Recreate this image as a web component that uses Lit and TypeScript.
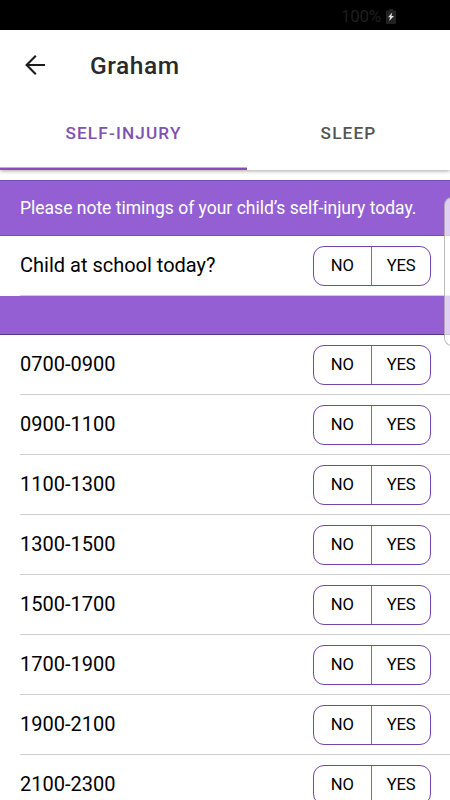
import { LitElement, html, css } from "lit";
import { customElement, property } from "lit/decorators.js";

@customElement("yes-no-toggle")
class YesNoToggle extends LitElement {
  static styles = css`
    :host { display: block; flex: none; }
    .group {
      box-sizing: border-box; width: 118.5px; height: 40px; display: flex;
      border: 1px solid #7445ab; border-radius: 11px; overflow: hidden;
    }
    .option {
      flex: 1; display: flex; align-items: center; justify-content: center;
      font-size: 16.6px; line-height: 20px; color: #000; letter-spacing: -0.1px;
    }
    .option + .option { border-left: 1px solid #8d60c4; }
  `;
  render() {
    return html`<div class="group"><div class="option">NO</div><div class="option">YES</div></div>`;
  }
}

@customElement("question-row")
class QuestionRow extends LitElement {
  @property() label = "";
  static styles = css`
    :host { display: block; flex: none; }
    .row {
      box-sizing: border-box; height: 60px; margin-left: 20px; padding-right: 19px;
      display: flex; align-items: center; justify-content: space-between;
      border-bottom: 1px solid #cfcfcf;
    }
    .label { padding-bottom: 1px; font-size: 20px; line-height: 24px; color: #000; white-space: nowrap; }
  `;
  render() {
    return html`<div class="row"><span class="label">${this.label}</span><yes-no-toggle></yes-no-toggle></div>`;
  }
}

@customElement("app-root")
class AppRoot extends LitElement {
  private slots = [
    "0700-0900", "0900-1100", "1100-1300", "1300-1500",
    "1500-1700", "1700-1900", "1900-2100", "2100-2300",
  ];
  static styles = css`
    :host {
      position: relative; display: flex; flex-direction: column; width: 450px; height: 800px;
      overflow: hidden; background: #fff; font-family: Roboto, "Noto Sans", sans-serif;
    }
    .status {
      box-sizing: border-box; flex: none; height: 30px; background: #000; color: #1e1e1e;
      display: flex; justify-content: flex-end; align-items: center; gap: 5px;
      padding: 2px 54px 0 0; font-size: 17px; line-height: 20px; letter-spacing: -0.3px;
    }
    .battery { display: block; width: 10px; height: 15px; }
    .header { flex: none; height: 140px; background: #fff; box-shadow: 0 1px 4px rgba(0, 0, 0, 0.35); }
    .bar { height: 70px; display: flex; align-items: center; padding-left: 24px; }
    .back { display: block; width: 22px; height: 22px; }
    .title {
      margin-left: 44px; padding-top: 2px; font-size: 24.5px; line-height: 30px;
      font-weight: 500; letter-spacing: 0.55px; color: #2a2a2a;
    }
    .tabs { display: flex; height: 70px; }
    .tab {
      box-sizing: border-box; display: flex; align-items: center; justify-content: center;
      font-size: 17.2px; line-height: 20px; font-weight: 500; letter-spacing: 1.15px; color: #555;
      flex: 1; padding: 1px 0 3px; border-bottom: 2px solid transparent;
    }
    .active {
      flex: none; width: 247px; color: #8052b0; border-bottom-color: #8250b8;
      box-shadow: inset 0 -1px #c5abe0;
    }
    .content { display: flex; flex-direction: column; padding-top: 10px; }
    .note {
      box-sizing: border-box; height: 56px; padding: 0 20px; background: #945fd3; color: #fff;
      border-top: 1px solid #7c4daf; border-bottom: 1px solid #7c4daf;
      display: flex; align-items: center; font-size: 17.5px; line-height: 22px; white-space: nowrap;
    }
    .divider { box-sizing: border-box; height: 39px; background: #945fd3; border-bottom: 1px solid #5b3487; }
    .edge {
      position: absolute; left: 444px; top: 197px; width: 20px; height: 149px; box-sizing: border-box;
      background: rgba(255, 255, 255, 0.7); border: 1px solid rgba(150, 150, 150, 0.65); border-radius: 8px;
    }
  `;
  render() {
    return html`
      <div class="status">
        <span>100%</span>
        <svg class="battery" viewBox="0 0 10 15">
          <path d="M1 1.5h2V0h4v1.5h2q1 0 1 1V14q0 1-1 1H1q-1 0-1-1V2.5q0-1 1-1z" fill="#222" />
          <path d="M6.2 3.5 2 8.2h2.1L3.2 12 8 7H5.5z" fill="#ddd" />
        </svg>
      </div>
      <div class="header">
        <div class="bar">
          <svg class="back" viewBox="0 0 22 22" fill="none" stroke="#1c1c1c" stroke-width="2.1">
            <path d="M21 11H3M11.8 1.8 2.6 11l9.2 9.2" />
          </svg>
          <span class="title">Graham</span>
        </div>
        <div class="tabs">
          <div class="tab active">SELF-INJURY</div>
          <div class="tab">SLEEP</div>
        </div>
      </div>
      <div class="content">
        <div class="note">Please note timings of your child’s self-injury today.</div>
        <question-row label="Child at school today?"></question-row>
        <div class="divider"></div>
        ${this.slots.map((slot) => html`<question-row label=${slot}></question-row>`)}
      </div>
      <div class="edge"></div>
    `;
  }
}
